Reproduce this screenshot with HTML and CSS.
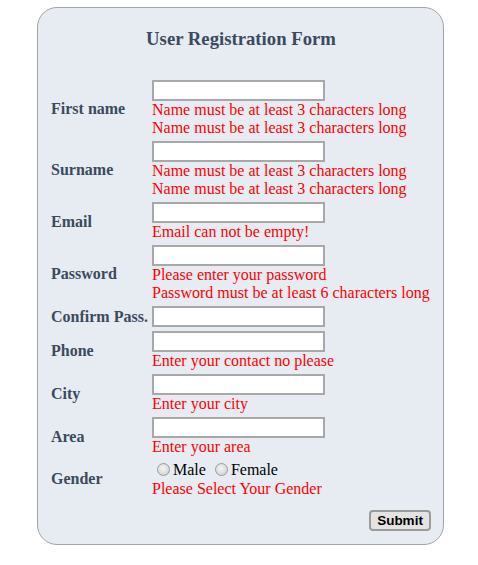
FILE: index.html
```html
<!DOCTYPE html>
<html>
<head>
<meta charset="utf-8">
<title>User Registration Form</title>
<link rel="stylesheet" href="styles.css">
</head>
<body>
<form class="card">
  <h3 class="title">User Registration Form</h3>
  <div class="grid">
    <div class="label">First name</div>
    <div class="field">
      <input class="text" type="text">
      <div class="err">Name must be at least 3 characters long</div>
      <div class="err">Name must be at least 3 characters long</div>
    </div>

    <div class="label">Surname</div>
    <div class="field">
      <input class="text" type="text">
      <div class="err">Name must be at least 3 characters long</div>
      <div class="err">Name must be at least 3 characters long</div>
    </div>

    <div class="label">Email</div>
    <div class="field">
      <input class="text" type="text">
      <div class="err">Email can not be empty!</div>
    </div>

    <div class="label">Password</div>
    <div class="field">
      <input class="text" type="password">
      <div class="err">Please enter your password</div>
      <div class="err">Password must be at least 6 characters long</div>
    </div>

    <div class="label">Confirm Pass.</div>
    <div class="field">
      <input class="text" type="password">
    </div>

    <div class="label">Phone</div>
    <div class="field">
      <input class="text" type="text">
      <div class="err">Enter your contact no please</div>
    </div>

    <div class="label">City</div>
    <div class="field">
      <input class="text" type="text">
      <div class="err">Enter your city</div>
    </div>

    <div class="label">Area</div>
    <div class="field">
      <input class="text" type="text">
      <div class="err">Enter your area</div>
    </div>

    <div class="label">Gender</div>
    <div class="field">
      <div class="radios"><label class="opt"><input class="radio" type="radio" name="g">Male</label> <label class="opt"><input class="radio" type="radio" name="g">Female</label></div>
      <div class="err">Please Select Your Gender</div>
    </div>
  </div>
  <div class="actions">
    <button class="submit" type="button">Submit</button>
  </div>
</form>
</body>
</html>
```
FILE: styles.css
```css
html, body {
  margin: 0;
  background: #ffffff;
}
body {
  padding: 7px 0 0 37px;
  font-family: "Liberation Serif", "Times New Roman", serif;
  font-size: 16px;
}
.card {
  box-sizing: border-box;
  width: 407px;
  height: 538px;
  background: #e7ecf3;
  border: 1px solid #a3a3a3;
  border-radius: 20px;
  padding: 0 12px 0 13px;
}
.title {
  margin: 20px 0 31px;
  font-size: 18.72px;
  line-height: 21px;
  font-weight: bold;
  text-align: center;
  color: #3b4a5d;
}
.grid {
  display: grid;
  grid-template-columns: 101px auto;
  row-gap: 4px;
}
.label {
  align-self: center;
  font-weight: bold;
  color: #3b4a5d;
  line-height: 18px;
  white-space: nowrap;
}
.field {
  display: flex;
  flex-direction: column;
  align-items: flex-start;
}
.text {
  display: block;
  box-sizing: border-box;
  width: 173px;
  height: 21px;
  margin: 0;
  border: 2px solid #a8a8a8;
  background: #ffffff;
  padding: 0 2px;
}
.err {
  color: #ff0000;
  line-height: 18px;
  white-space: nowrap;
}
.radios {
  line-height: 20px;
  color: #000000;
  white-space: nowrap;
}
.radio {
  appearance: none;
  -webkit-appearance: none;
  box-sizing: border-box;
  width: 13px;
  height: 13px;
  margin: 0 3px 0 5px;
  border: 1px solid #9a9a9a;
  border-radius: 50%;
  background: radial-gradient(circle at 45% 40%, #f4f4f4 0%, #dcdcdc 60%, #c4c4c4 100%);
  vertical-align: -1px;
}
.actions {
  display: flex;
  justify-content: flex-end;
  padding-top: 12px;
}
.submit {
  box-sizing: border-box;
  width: 62px;
  height: 21px;
  padding: 0;
  margin: 0;
  font-family: "Liberation Sans", Arial, sans-serif;
  font-weight: bold;
  font-size: 13.5px;
  color: #000000;
  background: #e3e3e3;
  border: 2px solid #9a9a9a;
  border-radius: 4px;
}
```
